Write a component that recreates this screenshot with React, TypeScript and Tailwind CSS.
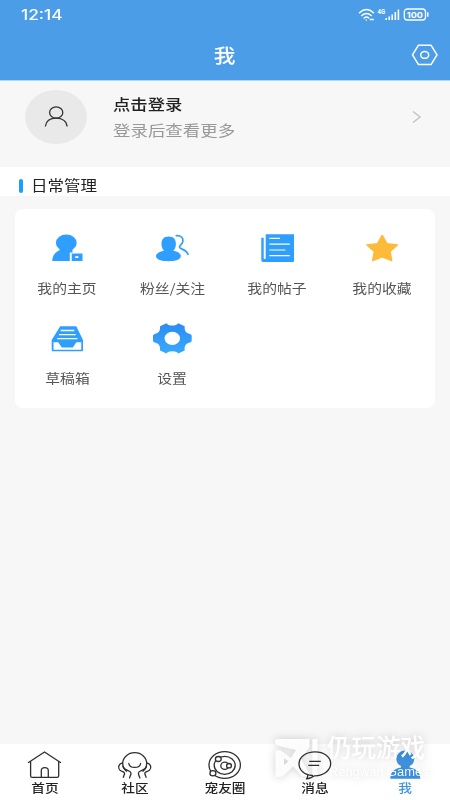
import clsx from 'clsx';
import { ReactNode } from 'react';

const Glyph = ({ children }: { children: ReactNode }) => (
  <svg width="41" height="32" viewBox="0 0 41 32" fill="none">
    {children}
  </svg>
);

const LineGlyph = ({
  className,
  children,
}: {
  className?: string;
  children: ReactNode;
}) => (
  <svg
    className={className}
    width="40"
    height="32"
    viewBox="0 0 40 32"
    fill="none"
    stroke="#2f2f2f"
    strokeWidth="1.3"
    strokeLinecap="round"
    strokeLinejoin="round"
  >
    {children}
  </svg>
);

const ProfileIcon = () => (
  <Glyph>
    <g fill="#2f9fff">
      <ellipse cx="19.3" cy="10.9" rx="10.4" ry="8.4" />
      <path d="M12.5 15.5h13v5h-2.7V29H5.3c0-5 2.2-8.3 7.5-11z" />
      <path
        fillRule="evenodd"
        d="M24.7 21.6h10.8V29H24.7zM28.2 24.2v1.8h3.2v-1.8z"
      />
    </g>
  </Glyph>
);

const FansIcon = () => (
  <Glyph>
    <g fill="#2f9fff">
      <path d="M16.7 4.6c5 0 7.2 2.8 7.2 7.2 0 4-1.8 8.7-7.2 8.7s-7.2-4.7-7.2-8.7c0-4.4 2.2-7.2 7.2-7.2z" />
      <path d="M12.5 18.5h8.4c5 1.2 7.9 3 7.9 5.5 0 3.6-5.2 5.2-12.3 5.2S4 27.6 4 24c0-2.5 3.5-4.3 8.5-5.5z" />
    </g>
    <path
      d="M24.3 3.7c5.2-.2 7.2 2.4 6.5 6-.5 3-3.3 3.4-3.3 5.3 0 2.6 6.5 1.5 8.500 7.300"
      stroke="#2f9fff"
      strokeWidth="1.7"
      strokeLinecap="round"
    />
  </Glyph>
);

const PostsIcon = () => (
  <Glyph>
    <path
      d="M8.7 2.2H37v26.3c0 1-.6 1.5-1.5 1.5h-29C5 30 4.3 29.2 4.3 28V5.7h2.4v20.9c0 .7 2 .7 2 0z"
      fill="#2f9fff"
    />
    <path
      d="M12.3 6.4H23M12.3 12.2h20.5M12.3 18h16.2M12.3 23.7h20.5"
      stroke="#fff"
      strokeWidth="1.2"
    />
  </Glyph>
);

const StarIcon = () => (
  <Glyph>
    <path
      d="M20.2 3.5 24.9 11.8 35.3 13 28 19.4 29.6 28.5 20.2 24.8 10.8 28.5 12.4 19.4 5 13 15.5 11.8z"
      fill="#fdbb39"
      stroke="#fdbb39"
      strokeWidth="1.6"
      strokeLinejoin="round"
    />
  </Glyph>
);

const DraftsIcon = () => (
  <Glyph>
    <path
      d="M13.2 4.3h16.1L36 18v10c0 .9-.5 1.3-1.3 1.3H6c-.8 0-1.3-.4-1.3-1.3V18z"
      fill="#2f9fff"
    />
    <path d="M6.5 20.2h4.7l3.6 5.2h11l3.6-5.2h4.9v7.5H6.5z" fill="#fff" />
    <path
      d="M13.7 8.5h13.6M12 12.6h16.7M10.2 16.6h20.2"
      stroke="#fff"
      strokeWidth="1.3"
    />
  </Glyph>
);

const GearIcon = () => (
  <Glyph>
    <defs>
      <linearGradient id="gear" x1="0" y1="0" x2="0" y2="1">
        <stop offset="0" stopColor="#2b8cf0" />
        <stop offset="1" stopColor="#38aaff" />
      </linearGradient>
    </defs>
    <path
      fillRule="evenodd"
      d="M14.5 1.2Q16 3.5 20.3 3.5T26.2 1.2L32.7 4.3C32.3 8.5 33.5 11 38 12Q39.7 12.4 39.7 14V18.5Q39.7 20 38 20.5C33.5 21.5 32.3 24 32.7 28.5L26.2 31.5Q24.6 29.2 20.3 29.2T14.5 31.5L8 28.5C8.4 24 7.2 21.5 2.7 20.5Q1 20 1 18.5V14Q1 12.4 2.7 12C7.2 11 8.4 8.5 8 4.3ZM12.5 16.3a7.8 6.6 0 1 0 15.6 0a7.8 6.6 0 1 0-15.6 0z"
      fill="url(#gear)"
    />
  </Glyph>
);

const HomeIcon = () => (
  <LineGlyph>
    <path d="M3.5 13.5 19.5 3l16 10.5M5.6 12.5v14.2q0 1.6 1.6 1.6h24.9q1.6 0 1.6-1.6V12.5" />
    <path d="M16.3 28v-6.3a3.5 3 0 0 1 7 0V28" />
  </LineGlyph>
);

const CommunityIcon = () => (
  <LineGlyph>
    <path d="M11.5 22.2A12 10.7 0 1 1 27.9 22.2" />
    <path d="M13.8 14.5c.8 5.3 11 5.3 11.8 0" />
    <path d="M7.5 13.8C3.5 14.8 2.4 19 5 21.3c1.6 1.3 4.800 1 4.600 3.500l-1.300 3.500M8 17.500c1 4.500 7.500 3.300 8 6.500.2 1.700-1 3.500-1.500 5" />
    <path d="M31.9 13.8c4 1 5.100 5.200 2.500 7.500-1.600 1.300-4.800 1-4.600 3.500l1.300 3.500M31.400 17.500c-1 4.500-7.500 3.300-8 6.500-.2 1.700 1 3.500 1.500 5" />
  </LineGlyph>
);

const CircleIcon = () => (
  <LineGlyph>
    <ellipse cx="19.7" cy="16" rx="15.7" ry="13.3" />
    <ellipse cx="19.7" cy="16.3" rx="10.5" ry="9" />
    <ellipse cx="19.8" cy="16.7" rx="4" ry="3.6" />
    <ellipse cx="24" cy="16.7" rx="2.4" ry="2.2" fill="#fff" />
    <ellipse cx="13.3" cy="10" rx="2.9" ry="2.5" fill="#fff" />
    <ellipse cx="7.9" cy="24.3" rx="3" ry="2.6" fill="#fff" />
  </LineGlyph>
);

const MessageIcon = () => (
  <LineGlyph className="relative z-10">
    <path d="M17.5 26.5C9 26 4 21 4 14.8 4 8 11 2.8 20 2.8s15.7 5 15.7 11.8-7 12-16 12.200c-2.400 1.600-5.200 2.900-8.200 3 1.200-1.200 1.400-2.600 1.200-4.300" />
    <path d="M14.7 12.3h10.6M13.7 16.3h10" />
  </LineGlyph>
);

const MeIcon = () => (
  <svg width="40" height="32" viewBox="0 0 40 32" fill="#3f93e0">
    <ellipse cx="20.3" cy="9.8" rx="9" ry="8.3" />
    <path d="M16 16h8.6v2.5c6.5.8 10.7 4.5 10.7 11.3h-30c0-6.8 4.2-10.5 10.700-11.300z" />
  </svg>
);

const entries = [
  { label: '我的主页', icon: <ProfileIcon /> },
  { label: '粉丝/关注', icon: <FansIcon /> },
  { label: '我的帖子', icon: <PostsIcon /> },
  { label: '我的收藏', icon: <StarIcon /> },
  { label: '草稿箱', icon: <DraftsIcon /> },
  { label: '设置', icon: <GearIcon /> },
];

const tabs = [
  { label: '首页', icon: <HomeIcon /> },
  { label: '社区', icon: <CommunityIcon /> },
  { label: '宠友圈', icon: <CircleIcon /> },
  { label: '消息', icon: <MessageIcon /> },
  { label: '我', icon: <MeIcon />, active: true },
];

const StatusBar = () => (
  <div className="flex h-[30px] items-center justify-between px-[21px]">
    <span className="origin-left scale-x-[1.2] font-['Inter',sans-serif] text-[14.4px] leading-[30px] font-medium">
      12:14
    </span>

    <svg width="71" height="14" viewBox="0 0 71 14" fill="none" stroke="#fff">
      <g strokeWidth="1.5" strokeLinecap="round">
        <path d="M1.5 4.7c4.5-4 9.5-4 14 0M3.800 7.500c3-2.600 6.400-2.600 9.400 0M6.200 10c1.500-1.200 3-1.200 4.500 0" />
        <path d="M8.3 12v.1M12.3 11.5h3" />
      </g>
      <text
        x="19.5"
        y="6"
        fill="#fff"
        stroke="none"
        fontSize="6.5"
        fontWeight="700"
        textLength="7.5"
        lengthAdjust="spacingAndGlyphs"
        fontFamily="Roboto, sans-serif"
      >
        4G
      </text>
      <path
        d="M28.2 10v2M31.2 8.5v3.5M34.2 6.5v5.5M37.3 4v8M40.4 1.5v10.5"
        strokeWidth="1.6"
      />
      <rect x="46.3" y="1" width="21.2" height="11" rx="3" strokeWidth="1.3" />
      <path d="M69.8 4.2v4.6" strokeWidth="1.4" />
      <text
        x="48.8"
        y="9.5"
        fill="#fff"
        stroke="none"
        fontSize="8"
        fontWeight="700"
        textLength="16"
        lengthAdjust="spacingAndGlyphs"
        fontFamily="Inter, sans-serif"
      >
        100
      </text>
    </svg>
  </div>
);

const TitleBar = () => (
  <div className="grid h-[49px] grid-cols-[1fr_auto_1fr] items-center px-3">
    <span />
    <h1 className="scale-x-[1.14] text-[19px] leading-[50px] font-medium">我</h1>
    <svg
      className="justify-self-end"
      width="27"
      height="23"
      viewBox="0 0 27 23"
      fill="none"
      stroke="#fff"
      strokeWidth="1.5"
      strokeLinejoin="round"
    >
      <path d="M7.5 1.2h12.500l6 9.700-6 9.700H7.500l-6-9.700z" />
      <ellipse cx="13.7" cy="10.900" rx="4" ry="3.400" />
    </svg>
  </div>
);

const LoginRow = () => (
  <div className="flex h-[86px] items-start pt-[9px] pr-[28px] pl-[25px]">
    <div className="flex h-[54px] w-[62px] items-center justify-center rounded-[50%] bg-[#e9e9e9]">
      <svg
        width="24"
        height="22"
        viewBox="0 0 24 22"
        fill="none"
        stroke="#333"
        strokeWidth="1.3"
      >
        <ellipse cx="12.2" cy="6.5" rx="6.6" ry="5.7" />
        <path d="M1.3 20.5C2 15 6.5 12.2 12.2 12.2S22.5 15 23.1 20.5" />
      </svg>
    </div>

    <div className="ml-[26px] flex grow flex-col items-start">
      <span className="origin-left scale-x-[1.14] text-[15.2px] leading-[27px] font-medium text-[#222]">
        点击登录
      </span>
      <span className="origin-left scale-x-[1.14] text-[15.3px] leading-[25px] text-[#999]">
        登录后查看更多
      </span>
    </div>

    <svg
      className="mt-[20px]"
      width="11"
      height="14"
      viewBox="0 0 11 14"
      fill="none"
      stroke="#c4c4c4"
      strokeWidth="1.5"
    >
      <path d="m2 1.5 7 5.5-7 5.5" />
    </svg>
  </div>
);

const Watermark = () => (
  <div className="pointer-events-none absolute top-[731px] left-[268px] flex text-white drop-shadow-[0_0_4px_rgba(0,0,0,0.2)]">
    <svg
      className="opacity-90"
      width="56"
      height="52"
      viewBox="0 0 56 52"
      fill="currentColor"
    >
      <path
        fillRule="evenodd"
        d="M10 8h31.5v8L33 27.5 42.5 45H34L25 35.5 15 45q-2 1-5 1-2.5 0-2.5-3V21q0-2 2.500-2 3 0 5 2l8 6 5-8-16.500-4q-4.500-1.500-4.500-4 0-3 3-3zM16 27v7l4.500-3.500z"
      />
      <rect x="44.3" y="8" width="5.2" height="38" rx="1" />
    </svg>
    <div className="ml-[3px] flex flex-col items-start pt-[1px]">
      <span className="text-[24.5px] leading-[29px] font-medium">仍玩游戏</span>
      <span className="mt-[3px] ml-[2px] font-['Liberation_Sans',sans-serif] text-[12.9px] leading-[16px] whitespace-nowrap opacity-90">
        Rengwan Games
      </span>
    </div>
  </div>
);

export default function App() {
  return (
    <div className="relative flex h-[800px] w-[450px] flex-col overflow-hidden bg-[#f7f7f7] font-['Noto_Sans_CJK_SC',sans-serif]">
      <header className="h-[81px] border-b border-[#b4d8f2] bg-[#4c9de8] text-white">
        <StatusBar />
        <TitleBar />
      </header>

      <LoginRow />

      <div className="flex h-[29px] items-center bg-white pl-[19px]">
        <span className="mt-[9px] h-[14px] w-[3.5px] rounded-sm bg-[#1b9cff]" />
        <h2 className="mt-[6px] ml-[8px] origin-left scale-x-[1.14] text-[14.5px] leading-[20px] text-[#222]">
          日常管理
        </h2>
      </div>

      <section className="mx-[15px] mt-[13px] grid h-[199px] grid-cols-4 content-start gap-y-px rounded-lg bg-white pt-[23px]">
        {entries.map(({ label, icon }) => (
          <div
            key={label}
            className="flex h-[89px] flex-col items-center gap-[14px] text-[#555]"
          >
            {icon}
            <span className="scale-x-[1.14] text-[13px] leading-[20px] whitespace-nowrap">
              {label}
            </span>
          </div>
        ))}
      </section>

      <nav className="mt-auto grid h-14 grid-cols-5 bg-white pt-[5px]">
        {tabs.map(({ label, icon, active }) => (
          <div key={label} className="flex flex-col items-center">
            {icon}
            <span
              className={clsx(
                'scale-x-[1.14] text-[12px] leading-[14px] font-medium whitespace-nowrap',
                active ? 'text-[#3f93e0]' : 'text-[#222]',
              )}
            >
              {label}
            </span>
          </div>
        ))}
      </nav>

      <Watermark />
    </div>
  );
}
